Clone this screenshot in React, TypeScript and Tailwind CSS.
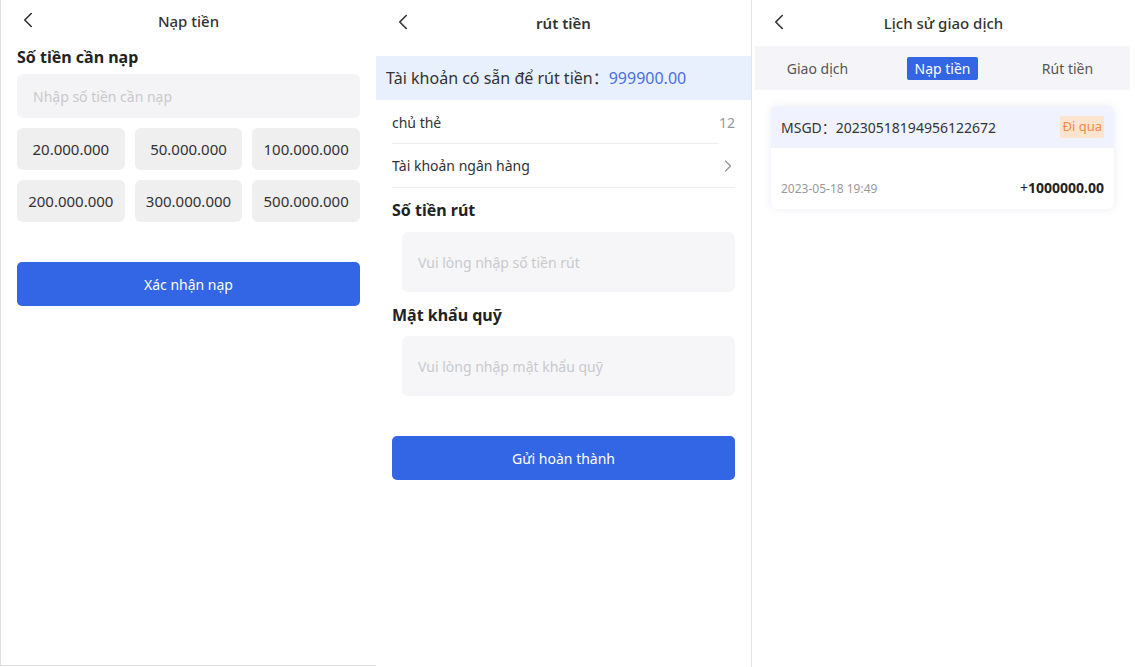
import { ChevronLeft, ChevronRight } from "lucide-react";

const font = {
  fontFamily: '"Noto Sans", "Noto Sans CJK SC", "Open Sans", sans-serif',
};

const amounts = [
  "20.000.000",
  "50.000.000",
  "100.000.000",
  "200.000.000",
  "300.000.000",
  "500.000.000",
];

function Header({ title, bold }: { title: string; bold?: boolean }) {
  return (
    <div className="relative flex h-[44px] items-center justify-center">
      <ChevronLeft
        className="absolute left-[14px] top-[8px] h-[26px] w-[26px] text-[#323233]"
        strokeWidth={1.5}
      />
      <span
        className={`text-[15px] text-[#323233] ${bold ? "font-semibold" : "font-medium"}`}
      >
        {title}
      </span>
    </div>
  );
}

function DepositPanel() {
  return (
    <div className="h-[666px] w-[376px] shrink-0 border-b border-l border-[#dedede]">
      <div className="-mt-[1px]">
        <Header title="Nạp tiền" />
      </div>
      <div className="px-[16px]">
        <div className="mt-[3px] text-[16px] font-bold leading-[22px] text-[#222]">
          Số tiền cần nạp
        </div>
        <div className="mt-[6px] flex h-[44px] items-center rounded-[6px] bg-[#f4f4f7] px-[16px] text-[14px] text-[#c8c9cc]">
          Nhập số tiền cần nạp
        </div>
        <div className="mt-[10px] grid grid-cols-3 gap-[10px]">
          {amounts.map((a) => (
            <div
              key={a}
              className="flex h-[42px] items-center justify-center rounded-[6px] bg-[#f0eff0] text-[15px] text-[#323233]"
            >
              {a}
            </div>
          ))}
        </div>
        <button className="mt-[40px] flex h-[44px] w-full items-center justify-center rounded-[5px] bg-[#3366e4] text-[14px] text-white">
          Xác nhận nạp
        </button>
      </div>
    </div>
  );
}

function WithdrawPanel() {
  return (
    <div className="h-[667px] w-[376px] shrink-0 border-r border-[#e3e3e3]">
      <div className="mt-[1px]">
        <Header title="rút tiền" bold />
      </div>
      <div className="mt-[11px] flex h-[44px] items-center bg-[#e9f0fd] px-[10px] text-[16px]">
        <span className="text-[#333]">Tài khoản có sẵn để rút tiền：</span>
        <span className="text-[#4a6fe0]">999900.00</span>
      </div>
      <div className="px-[16px]">
        <div className="relative flex h-[44px] items-center justify-between text-[14px] text-[#323233]">
          <span>chủ thẻ</span>
          <span className="text-[#969799]">12</span>
          <div className="absolute bottom-0 left-0 right-[16px] border-b border-[#ebedf0]" />
        </div>
        <div className="flex h-[44px] items-center justify-between border-b border-[#ebedf0] text-[14px] text-[#323233]">
          <span>Tài khoản ngân hàng</span>
          <ChevronRight
            className="-mr-[3px] h-[20px] w-[20px] text-[#969799]"
            strokeWidth={1.5}
          />
        </div>
        <div className="mt-[11px] text-[16px] font-bold leading-[22px] text-[#222]">
          Số tiền rút
        </div>
        <div className="ml-[10px] mt-[11px] flex h-[60px] items-center rounded-[6px] bg-[#f6f6f8] px-[16px] text-[14px] text-[#c8c9cc]">
          Vui lòng nhập số tiền rút
        </div>
        <div className="mt-[12px] text-[16px] font-bold leading-[22px] text-[#222]">
          Mật khẩu quỹ
        </div>
        <div className="ml-[10px] mt-[10px] flex h-[60px] items-center rounded-[6px] bg-[#f6f6f8] px-[16px] text-[14px] text-[#c8c9cc]">
          Vui lòng nhập mật khẩu quỹ
        </div>
        <button className="mt-[40px] flex h-[44px] w-full items-center justify-center rounded-[5px] bg-[#3366e4] text-[14px] text-white">
          Gửi hoàn thành
        </button>
      </div>
    </div>
  );
}

function HistoryPanel() {
  const tabs = ["Giao dịch", "Nạp tiền", "Rút tiền"];
  return (
    <div className="h-[667px] flex-1">
      <div className="mt-[1px]">
        <Header title="Lịch sử giao dịch" />
      </div>
      <div className="ml-[3px] mr-[5px] mt-[1px] grid h-[44px] grid-cols-3 items-center bg-[#f5f5f9] text-[14px] text-[#555]">
        {tabs.map((t, i) => (
          <div key={t} className="flex justify-center">
            <span
              className={
                i === 1
                  ? "rounded-[2px] bg-[#3366e4] px-[8px] py-[1px] text-white"
                  : "py-[1px]"
              }
            >
              {t}
            </span>
          </div>
        ))}
      </div>
      <div className="ml-[19px] mr-[21px] mt-[16px] overflow-hidden rounded-[6px] bg-white shadow-[0_0_8px_rgba(60,80,160,0.10)]">
        <div className="flex h-[42px] items-center justify-between bg-[#f0f3fd] px-[10px]">
          <span className="text-[14px] text-[#333]">MSGD：20230518194956122672</span>
          <span className="rounded-[2px] bg-[#fde4cf] px-[2px] py-[1px] text-[13px] text-[#f28a4c]">
            Đi qua
          </span>
        </div>
        <div className="flex h-[61px] items-end justify-between px-[10px] pb-[11px]">
          <span className="text-[12px] text-[#999]">2023-05-18 19:49</span>
          <span className="text-[14px] text-[#222]">
            +<span className="font-bold">1000000.00</span>
          </span>
        </div>
      </div>
    </div>
  );
}

export default function App() {
  return (
    <div className="flex h-[667px] w-[1135px] overflow-hidden bg-white" style={font}>
      <DepositPanel />
      <WithdrawPanel />
      <HistoryPanel />
    </div>
  );
}
